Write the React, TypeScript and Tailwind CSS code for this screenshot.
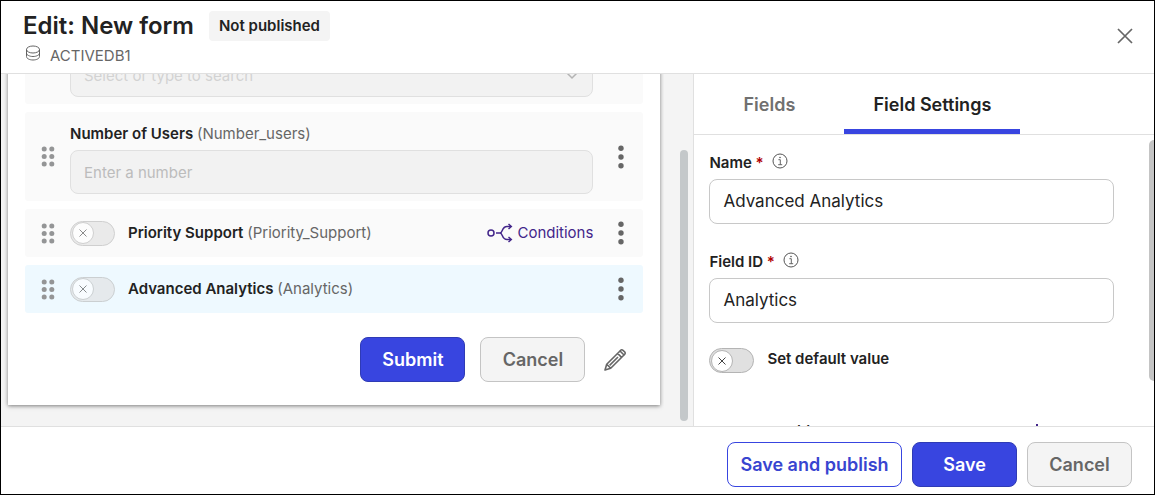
import type { ReactNode } from 'react';

function DragHandle() {
  return (
    <svg width="14" height="21" viewBox="0 0 14 21" className="shrink-0 fill-[#949596]" aria-hidden="true">
      {[3, 10.5, 18].map((cy) => (
        <g key={cy}>
          <circle cx="3.2" cy={cy} r="2.5" />
          <circle cx="10.8" cy={cy} r="2.5" />
        </g>
      ))}
    </svg>
  );
}

function MoreButton() {
  return (
    <button type="button" aria-label="More options" className="flex w-[50px] shrink-0 justify-center pl-1.5">
      <svg width="6" height="24" viewBox="0 0 6 24" className="fill-[#666]">
        <circle cx="3" cy="3.3" r="2.7" />
        <circle cx="3" cy="12" r="2.7" />
        <circle cx="3" cy="20.7" r="2.7" />
      </svg>
    </button>
  );
}

function Toggle({ id, muted }: { id: string; muted?: boolean }) {
  return (
    <span
      className={
        'relative flex h-[25px] w-[45px] shrink-0 items-center rounded-full border border-[#b4b4b4] bg-[#e0e0e0] pl-px ' +
        (muted ? 'opacity-60' : '')
      }
    >
      <input id={id} type="checkbox" role="switch" className="absolute inset-0 size-full appearance-none rounded-full" />
      <span className="pointer-events-none flex size-[22px] items-center justify-center rounded-full border border-[#b4b4b4] bg-white">
        <svg width="8" height="8" viewBox="0 0 8 8" fill="none" stroke="#444" strokeWidth="1">
          <path d="M0.5 0.5 7.5 7.5M7.5 0.5 0.5 7.5" />
        </svg>
      </span>
    </span>
  );
}

function InfoIcon() {
  return (
    <svg width="16" height="16" viewBox="0 0 16 16" fill="none" stroke="#555" aria-hidden="true">
      <circle cx="8" cy="8" r="7" />
      <path d="M6.400 6.700H8.300V11.600M6.200 11.700H10.200" strokeWidth=".9" />
      <circle cx="8" cy="4.500" r="0.8" fill="#555" stroke="none" />
    </svg>
  );
}

function FormRow({ selected, children }: { selected?: boolean; children: ReactNode }) {
  return (
    <div className={'flex items-center rounded-[3px] pl-4 ' + (selected ? 'bg-[#eef9ff]' : 'bg-[#fafafa]')}>
      <DragHandle />
      {children}
    </div>
  );
}

function ToggleRow({ id, name, fieldId, selected, conditions }: {
  id: string;
  name: string;
  fieldId: string;
  selected?: boolean;
  conditions?: boolean;
}) {
  return (
    <FormRow selected={selected}>
      <div className="ml-[15px] flex h-12 flex-1 items-center gap-[13px]">
        <Toggle id={id} muted />
        <label htmlFor={id} className="flex-1 text-[15px] leading-5 font-semibold text-[#222]">
          {name} <span className="font-normal text-[#666]">({fieldId})</span>
        </label>
        {conditions && (
          <a href="#conditions" className="flex items-center gap-1 text-[15px] leading-5 text-[#43268a]">
            <svg width="26" height="20" viewBox="0 0 26 20" fill="none" stroke="currentColor" strokeWidth="1.500">
              <circle cx="4" cy="10" r="3" />
              <path d="M9 10H13C16 10 14.500 3.500 20 3.500H24M13 10C16 10 14.500 16.500 20 16.500H24" />
              <path d="M21.500 1 24.300 3.500 21.500 6M21.500 14 24.300 16.500 21.500 19" />
            </svg>
            Conditions
          </a>
        )}
      </div>
      <MoreButton />
    </FormRow>
  );
}

function FormPreview() {
  return (
    <section className="flex min-w-0 flex-[693] bg-[#f4f4f4]">
      <div className="flex flex-1 flex-col justify-end overflow-hidden pb-[21px] pl-[7px]">
        <form className="mr-1 flex shrink-0 flex-col gap-2 bg-white px-[17px] pb-[23px] shadow-[0_1px_4px_rgba(0,0,0,0.5)]">
          <FormRow>
            <div className="relative ml-[15px] flex-1 pt-9 pb-[7px]">
              <select
                aria-label="Select or type to search"
                className="h-11 w-full appearance-none rounded-lg border border-[#e0e0e0] bg-[#f2f2f2] px-[13px] pt-0.5 text-[15px] text-[#d2d2d2] opacity-100"
              >
                <option>Select or type to search</option>
              </select>
              <svg width="12" height="8" viewBox="0 0 12 8" className="pointer-events-none absolute right-[15px] bottom-6" fill="none" stroke="#b4b4b4" strokeWidth="1.500">
                <path d="M1 1 6 6 11 1" />
              </svg>
            </div>
            <MoreButton />
          </FormRow>
          <FormRow>
            <div className="ml-[15px] flex flex-1 flex-col gap-1.5 pt-3 pb-[7px]">
              <label htmlFor="users" className="text-[15px] leading-5 font-semibold text-[#222]">
                Number of Users <span className="font-normal text-[#666]">(Number_users)</span>
              </label>
              <input
                id="users"
                placeholder="Enter a number"
                className="h-11 w-full rounded-lg border border-[#e0e0e0] bg-[#f2f2f2] px-[13px] text-[15px] placeholder:text-[#bcbcbc]"
              />
            </div>
            <MoreButton />
          </FormRow>
          <ToggleRow id="priority" name="Priority Support" fieldId="Priority_Support" conditions />
          <ToggleRow id="analytics" name="Advanced Analytics" fieldId="Analytics" selected />
          <div className="flex items-center justify-end gap-[15px] pt-4 pr-[17px]">
            <button type="button" className="h-[45px] w-[105px] rounded-lg border border-[#2f3bb5] bg-[#3845e0] text-lg font-semibold text-white">
              Submit
            </button>
            <button type="button" className="h-[45px] w-[105px] rounded-lg border border-[#c4c4c4] bg-[#f4f4f4] text-lg font-semibold text-[#666]">
              Cancel
            </button>
            <button type="button" aria-label="Edit buttons" className="ml-1">
              <svg width="22" height="22" viewBox="0 0 22 22" fill="none" stroke="#666" strokeWidth="1.600" strokeLinejoin="round">
                <path d="M1 21 2.700 15.300 16 2 20 6 6.700 19.300ZM13.600 4.400 17.600 8.400M5.600 16.400 14 8M2.700 15.300 6.700 19.300" />
                <path d="M16 2 17 1Q18 .5 19 1.300L20.800 3Q21.500 4 20.900 5L20 6" />
              </svg>
            </button>
          </div>
        </form>
      </div>
      <div className="flex w-[29px] flex-col justify-end pr-[5px] pb-[5px]">
        <div className="ml-auto h-[78%] w-2 rounded-full bg-[#c4c8ca]" />
      </div>
    </section>
  );
}

function TextField({ id, label, value }: { id: string; label: string; value: string }) {
  return (
    <div className="flex flex-col gap-1.5">
      <div className="flex gap-2">
        <label htmlFor={id} className="text-[15px] leading-5 font-semibold text-[#222]">
          {label} <span className="text-[#b00000]">*</span>
        </label>
        <InfoIcon />
      </div>
      <input
        id={id}
        defaultValue={value}
        className="h-[45px] w-full rounded-lg border border-[#c8c8c8] bg-white px-[13px] pb-0.5 text-[17px] text-[#222]"
      />
    </div>
  );
}

function SettingsPanel() {
  return (
    <section className="flex min-w-0 flex-[460] flex-col border-l border-[#e0e0e0]">
      <nav className="flex h-[61px] shrink-0 gap-5 border-b border-[#e0e0e0] pl-5 text-lg font-semibold">
        <button type="button" className="w-[110px] border-b-[5px] border-transparent pt-1.5 text-[#707070]">Fields</button>
        <button type="button" className="w-[176px] border-b-[5px] border-[#3845e0] pt-1.5 text-[#222]">Field Settings</button>
      </nav>
      <div className="flex min-h-0 flex-1 justify-between pl-[15px]">
        <div className="flex flex-1 flex-col overflow-hidden pt-[18px]">
          <div className="flex shrink-0 flex-col gap-7">
            <TextField id="name" label="Name" value="Advanced Analytics" />
            <TextField id="field-id" label="Field ID" value="Analytics" />
          </div>
          <div className="flex shrink-0 gap-[13px] pt-[25px]">
            <Toggle id="default" />
            <label htmlFor="default" className="text-[15px] leading-[22px] font-semibold text-[#222]">Set default value</label>
          </div>
          <div className="flex shrink-0 items-start justify-between pt-[49px] pr-[70px] pl-[18px] text-[15px] leading-5">
            <span className="font-semibold text-[#222]">Add conditions</span>
            <button type="button" aria-label="Add" className="pt-0.5">
              <svg width="14" height="14" viewBox="0 0 14 14" stroke="#43268a" strokeWidth="2">
                <path d="M7 0V14M0 7H14" />
              </svg>
            </button>
          </div>
        </div>
        <div className="mt-[5px] ml-[35px] h-[241px] w-[5px] shrink-0 rounded-l-full bg-[#c4c4c4]" />
      </div>
    </section>
  );
}

export default function App() {
  return (
    <div className="flex h-screen flex-col border border-black bg-white font-['Inter',sans-serif]">
      <header className="flex shrink-0 items-start justify-between border-b border-[#e0e0e0] pt-[9px] pr-[21px] pb-[3px] pl-[22px]">
        <div>
          <div className="flex items-center gap-[15px]">
            <h1 className="pt-px text-2xl leading-[30px] font-semibold text-[#222]">Edit: New form</h1>
            <span className="rounded bg-[#f4f4f4] px-2.5 py-[5px] text-[15px] leading-5 font-semibold text-[#222]">Not published</span>
          </div>
          <div className="flex h-[29px] gap-[9px] pt-1 pl-0.5 text-[15px] leading-[22px] text-[#666]">
            <svg width="16" height="16" viewBox="0 0 16 16" fill="none" stroke="#555" strokeWidth=".9" aria-hidden="true">
              <ellipse cx="8" cy="4.500" rx="6.500" ry="3.500" />
              <path d="M1.500 4.500V11.500C1.500 13.500 4.500 15 8 15S14.500 13.500 14.500 11.500V4.500M1.500 8C1.500 10 4.500 11.500 8 11.500S14.500 10 14.500 8" />
            </svg>
            ACTIVEDB1
          </div>
        </div>
        <button type="button" aria-label="Close" className="pt-[18px]">
          <svg width="16" height="16" viewBox="0 0 16 16" fill="none" stroke="#666" strokeWidth="1.700">
            <path d="M1 1 15 15M15 1 1 15" />
          </svg>
        </button>
      </header>
      <main className="flex min-h-0 flex-1">
        <FormPreview />
        <SettingsPanel />
      </main>
      <footer className="flex shrink-0 justify-end gap-2.5 border-t border-[#e0e0e0] pt-[15px] pr-[22px] pb-[7px] text-lg font-semibold">
        <button type="button" className="h-[45px] w-[175px] rounded-lg border border-[#3845e0] bg-white text-[#3845d0]">Save and publish</button>
        <button type="button" className="h-[45px] w-[105px] rounded-lg border border-[#2f3bb5] bg-[#3845e0] text-white">Save</button>
        <button type="button" className="h-[45px] w-[105px] rounded-lg border border-[#c4c4c4] bg-[#f4f4f4] text-[#666]">Cancel</button>
      </footer>
    </div>
  );
}
